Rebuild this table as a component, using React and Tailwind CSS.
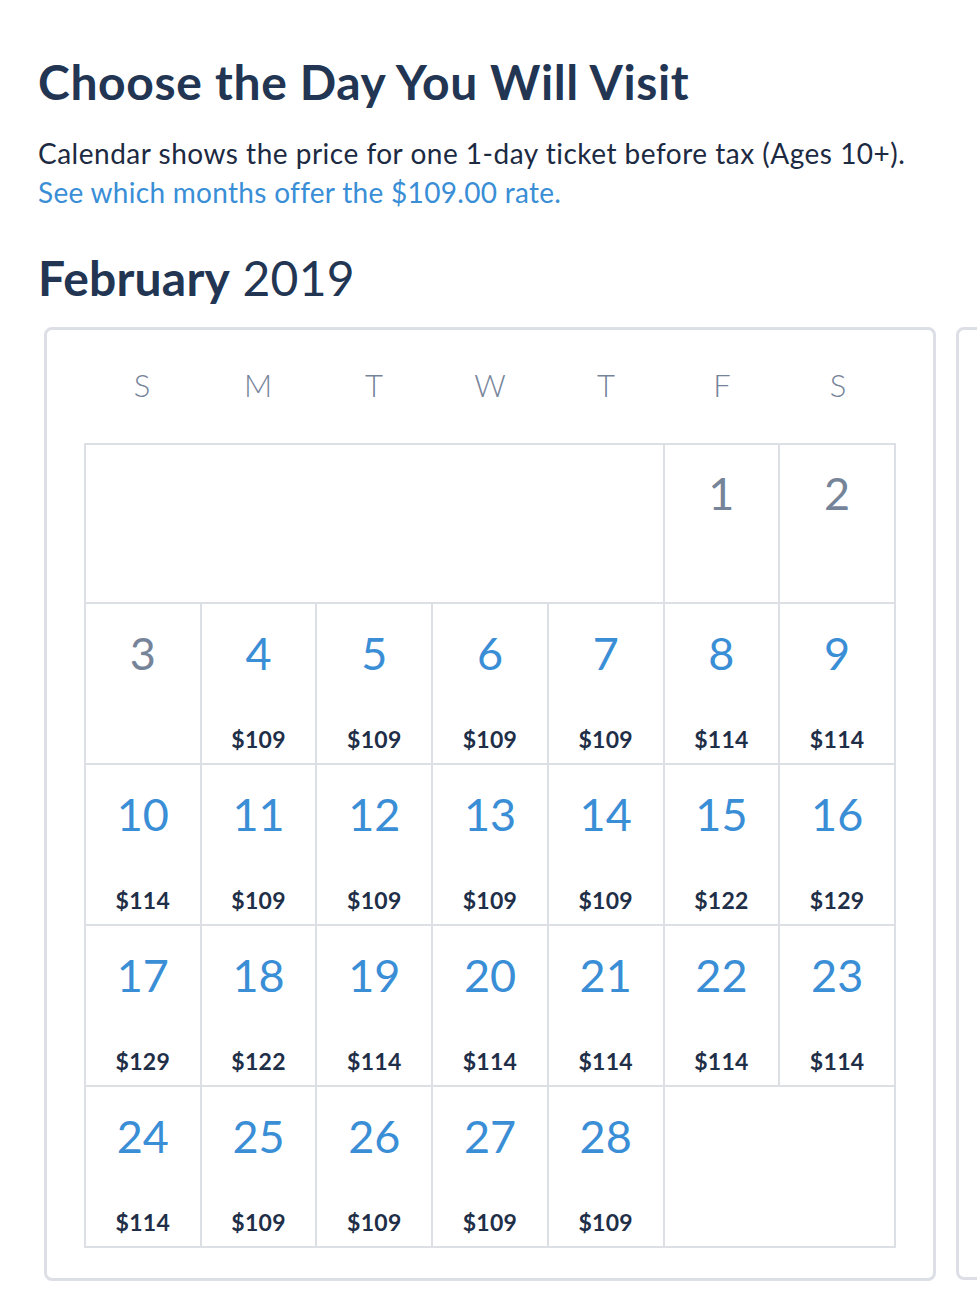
import React from "react";

const FONT = { fontFamily: "Lato, 'Open Sans', 'Liberation Sans', sans-serif" };

const weeks = [
  [{ span: 5 }, { d: 1, gray: true }, { d: 2, gray: true }],
  [
    { d: 3, gray: true },
    { d: 4, p: 109 },
    { d: 5, p: 109 },
    { d: 6, p: 109 },
    { d: 7, p: 109 },
    { d: 8, p: 114 },
    { d: 9, p: 114 },
  ],
  [
    { d: 10, p: 114 },
    { d: 11, p: 109 },
    { d: 12, p: 109 },
    { d: 13, p: 109 },
    { d: 14, p: 109 },
    { d: 15, p: 122 },
    { d: 16, p: 129 },
  ],
  [
    { d: 17, p: 129 },
    { d: 18, p: 122 },
    { d: 19, p: 114 },
    { d: 20, p: 114 },
    { d: 21, p: 114 },
    { d: 22, p: 114 },
    { d: 23, p: 114 },
  ],
  [
    { d: 24, p: 114 },
    { d: 25, p: 109 },
    { d: 26, p: 109 },
    { d: 27, p: 109 },
    { d: 28, p: 109 },
    { span: 2 },
  ],
];

function Cell({ c, first }) {
  const h = first ? "h-[159px]" : "h-[161px]";
  if (c.span === 5)
    return <div className={`col-span-5 ${h} border-r-2 border-b-2 border-[#dcdfe4]`} />;
  if (c.span === 2)
    return <div className={`col-span-2 ${h} border-r-2 border-b-2 border-[#dcdfe4]`} />;
  return (
    <div className={`relative ${h} border-r-2 border-b-2 border-[#dcdfe4] flex flex-col items-center`}>
      <div
        className={`${first ? "mt-[26px]" : "mt-[27px]"} text-[45px] leading-none font-normal ${
          c.gray ? "text-[#76849a]" : "text-[#3a8ed6]"
        }`}
      >
        {c.d}
      </div>
      {c.p && (
        <div className="absolute top-[124px] left-0 right-0 text-center text-[23px] leading-none font-bold text-[#1f2f48] tracking-[0.3px]">
          ${c.p}
        </div>
      )}
    </div>
  );
}

export default function App() {
  const cells = weeks.flatMap((w, wi) => w.map((c) => ({ c, first: wi === 0 })));
  return (
    <div className="w-[977px] h-[1297px] overflow-hidden bg-white" style={FONT}>
      <div className="pl-[38px] pt-[58px]">
        <h1 className="text-[48px] leading-none font-bold text-[#223654] tracking-[0.65px]">
          Choose the Day You Will Visit
        </h1>
        <p className="mt-[28px] text-[28px] leading-[39px] text-[#1c2a42] tracking-[0.5px]">
          Calendar shows the price for one 1-day ticket before tax (Ages 10+).
        </p>
        <p className="text-[28px] leading-[39px] text-[#3a8ed6] tracking-[0.3px]">
          See which months offer the $109.00 rate.
        </p>
        <h2 className="mt-[42px] text-[48px] leading-none text-[#223654] tracking-[0.2px]">
          <span className="font-bold">February</span> <span className="font-normal">2019</span>
        </h2>
      </div>
      <div className="flex gap-[20px] pl-[44px] mt-[25px]">
        <div className="shrink-0 w-[892px] rounded-[8px] border-[3px] border-[#dcdfe5] px-[37px] pb-[30px]">
          <div className="grid grid-cols-7 h-[113px] items-center">
            {["S", "M", "T", "W", "T", "F", "S"].map((l, i) => (
              <div key={i} className="text-center text-[31px] font-light text-[#76849a] -mt-[2px]">
                {l}
              </div>
            ))}
          </div>
          <div className="grid grid-cols-7 border-l-2 border-t-2 border-[#dcdfe4]">
            {cells.map(({ c, first }, i) => (
              <Cell key={i} c={c} first={first} />
            ))}
          </div>
        </div>
        <div className="shrink-0 w-[890px] h-[953px] rounded-[8px] border-[3px] border-[#dcdfe5]" />
      </div>
    </div>
  );
}
